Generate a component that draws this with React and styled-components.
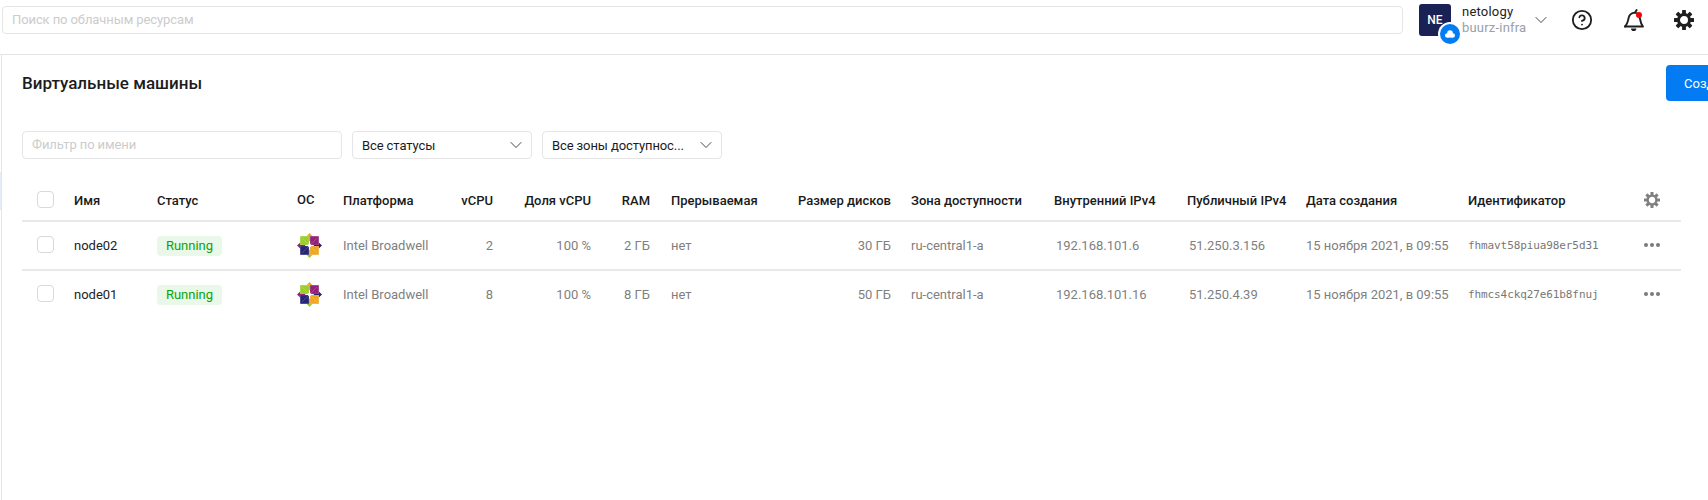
import React from 'react'
import styled, { createGlobalStyle } from 'styled-components'
import { ChevronDown, CircleHelp } from 'lucide-react'

const GlobalStyle = createGlobalStyle`
    html, body {
        margin: 0;
        height: 100%;
        background: #fff;
        overflow: hidden;
    }
    body {
        font-family: "Roboto", "Noto Sans", sans-serif;
        font-size: 13px;
        color: #000;
    }
    #root {
        height: 100%;
    }
`

const Page = styled.div`
    width: 1708px;
    height: 500px;
    overflow: hidden;
`

const Header = styled.header`
    display: flex;
    align-items: flex-start;
    height: 50px;
    padding: 4px 0 0 2px;
    border-bottom: 1px solid #e5e5e5;
`

const Search = styled.div`
    box-sizing: border-box;
    width: 1401px;
    height: 28px;
    margin-top: 2px;
    padding-left: 9px;
    line-height: 26px;
    border: 1px solid #e5e5e5;
    border-radius: 4px;
    color: #ccc;
    letter-spacing: -0.1px;
`

const Account = styled.div`
    display: flex;
    align-items: flex-start;
    margin-left: 16px;
`

const Avatar = styled.div`
    position: relative;
    width: 32px;
    height: 32px;
    border-radius: 3px;
    background: #1a2255;
    color: #fff;
    font-size: 12px;
    font-weight: 500;
    line-height: 33px;
    text-align: center;
`

const CloudBadge = styled.span`
    position: absolute;
    right: -9px;
    bottom: -8px;
    display: flex;
    align-items: center;
    justify-content: center;
    width: 20px;
    height: 20px;
    border-radius: 50%;
    background: #027bf3;
    box-shadow: 0 0 0 2px #fff;
`

const AccountText = styled.div`
    margin-left: 11px;
    line-height: 16px;
    letter-spacing: 0.2px;
`

const AccountName = styled.div`
    color: #222;
`

const FolderName = styled.div`
    color: #9aa0a8;
`

const AccountChevron = styled(ChevronDown)`
    margin: 6px 0 0 5px;
    color: #222;
`

const HeaderIcon = styled.span`
    position: relative;
    display: flex;
    align-items: center;
    justify-content: center;
    width: 24px;
    height: 24px;
    margin-top: 4px;
    margin-left: ${(props) => props.$gap}px;
    color: #1f1f1f;
`

const RedDot = styled.span`
    position: absolute;
    top: 4px;
    right: 3px;
    width: 6px;
    height: 6px;
    border-radius: 50%;
    background: #f00;
`

const Content = styled.main`
    position: relative;
    box-sizing: border-box;
    height: 445px;
    margin-left: 1px;
    padding-left: 20px;
    border-left: 1px solid #e5e5e5;
`

const SideHint = styled.span`
    position: absolute;
    left: -2px;
    top: 117px;
    width: 1px;
    height: 38px;
    background: #e3edf8;
`

const TitleRow = styled.div`
    display: flex;
    justify-content: space-between;
    width: 1744px;
    height: 46px;
    padding-top: 10px;
`

const Title = styled.h1`
    margin: 0;
    padding-top: 8px;
    font-size: 17px;
    line-height: 20px;
    font-weight: 500;
    color: #1c1c1c;
`

const CreateButton = styled.button`
    width: 100px;
    height: 36px;
    padding: 0 0 0 18px;
    border: 0;
    border-radius: 4px;
    background: #027bf3;
    color: #fff;
    font: inherit;
    text-align: left;
    white-space: nowrap;
`

const Filters = styled.div`
    display: flex;
    gap: 10px;
    margin-top: 20px;
`

const FilterInput = styled.div`
    box-sizing: border-box;
    width: 320px;
    height: 28px;
    padding-left: 9px;
    line-height: 26px;
    border: 1px solid #e5e5e5;
    border-radius: 4px;
    color: #ccc;
    letter-spacing: -0.1px;
`

const Select = styled.div`
    box-sizing: border-box;
    display: flex;
    align-items: center;
    justify-content: space-between;
    width: 180px;
    height: 28px;
    padding: 0 5px 0 9px;
    border: 1px solid #e5e5e5;
    border-radius: 4px;
    color: #1c1c1c;
    letter-spacing: -0.1px;

    svg {
        color: #222;
    }
`

const Table = styled.div`
    width: 1659px;
    margin-top: 21px;
`

const Row = styled.div`
    display: grid;
    grid-template-columns: 52px 83px 140px 46px 102px 48px 98px 59px 140px 101px 163px 133px 119px 162px 176px 37px;
    align-items: center;
    height: ${(props) => (props.$head ? '40px' : '47px')};
    border-bottom: 2px solid ${(props) => (props.$last ? 'transparent' : '#e9e9e9')};
`

const HeadCell = styled.div`
    font-weight: 500;
    color: #1a1a1a;
    white-space: nowrap;
    text-align: ${(props) => (props.$right ? 'right' : 'left')};
    padding-left: ${(props) => props.$pad || 0}px;
`

const OsHead = styled(HeadCell)`
    padding-bottom: 2px;
`

const Cell = styled.div`
    color: #7f7f7f;
    white-space: nowrap;
    text-align: ${(props) => (props.$right ? 'right' : 'left')};
    padding-left: ${(props) => props.$pad || 0}px;
`

const NameCell = styled(Cell)`
    color: #222;
`

const IdCell = styled(Cell)`
    font-family: "DejaVu Sans Mono", monospace;
    font-size: 11px;
    letter-spacing: -0.1px;
    color: #777;
`

const CheckCell = styled.div`
    display: flex;
    padding: 0 0 2px 15px;
`

const Checkbox = styled.span`
    box-sizing: border-box;
    display: block;
    width: 17px;
    height: 17px;
    border: 1px solid #d9d9d9;
    border-radius: 4px;
`

const StatusBadge = styled.span`
    display: inline-block;
    width: 65px;
    height: 20px;
    line-height: 20px;
    border-radius: 4px;
    background: #e9f8e9;
    color: #0aa50a;
    text-align: center;
`

const LogoCell = styled.div`
    display: flex;
`

const GearCell = styled.div`
    display: flex;
    color: #808080;
`

const Dots = styled.div`
    display: flex;
    gap: 2px;
    padding-bottom: 2px;
`

const Dot = styled.span`
    width: 4px;
    height: 4px;
    border-radius: 50%;
    background: #7a7a7a;
`

const GearIcon = ({ size }) => (
    <svg width={size} height={size} viewBox="0 0 24 24" fill="currentColor">
        <circle cx="12" cy="12" r="6.6" fill="none" stroke="currentColor" strokeWidth="3.6" />
        {[0, 45, 90, 135, 180, 225, 270, 315].map((deg) => (
            <rect key={deg} x="9.7" y="0" width="4.6" height="6" rx="0.6" transform={`rotate(${deg} 12 12)`} />
        ))}
    </svg>
)

const BellIcon = () => (
    <svg width="21" height="22" viewBox="0 0 21 22" fill="none" stroke="currentColor" strokeWidth="1.9" strokeLinecap="round" strokeLinejoin="round">
        <path d="M2 17.5C4.5 15 5 12 5.6 9C6.3 5.5 9 3.8 12 3.6L13.6 1" />
        <path d="M12 3.6C15 4 16.4 6.5 16.9 9.5C17.4 12.5 18 15.2 20 17.5H2" />
        <path d="M8 19.5a2.7 2.7 0 0 0 5.4 0z" fill="currentColor" stroke="none" />
    </svg>
)

const CloudIcon = () => (
    <svg width="10" height="8" viewBox="0 0 10 8" fill="#fff">
        <circle cx="5" cy="3" r="2.8" />
        <circle cx="2.2" cy="5.4" r="2.2" />
        <circle cx="7.8" cy="5.4" r="2.2" />
        <rect x="2" y="4" width="6" height="3.6" />
    </svg>
)

const CentOsLogo = () => (
    <svg width="25" height="25" viewBox="0 0 25 25">
        <path d="M12.5 0l3 3.2h-2.2v5h-1.6v-5H9.5z" fill="#efa724" />
        <path d="M12.5 25l-3-3.2h2.2v-5h1.6v5h2.2z" fill="#9ccd2a" />
        <path d="M0 12.5l3.2-3v2.2h5v1.6h-5v2.2z" fill="#932279" />
        <path d="M25 12.5l-3.2 3v-2.2h-5v-1.6h5V9.500z" fill="#262577" />
        <rect x="3.2" y="3.2" width="8.7" height="8.7" fill="#9ccd2a" />
        <rect x="13.1" y="3.2" width="8.7" height="8.7" fill="#932279" />
        <rect x="3.2" y="13.1" width="8.700" height="8.7" fill="#262577" />
        <rect x="13.1" y="13.1" width="8.7" height="8.7" fill="#efa724" />
        <path d="M5 5l6 6M20 5l-6 6M5 20l6-6M20 20l-6-6" stroke="#fff" strokeOpacity="0.25" strokeWidth="0.7" />
        <path d="M12.5 10.300l2.200 2.200-2.200 2.200-2.200-2.200z" fill="#fff" />
    </svg>
)

const vms = [
    { name: 'node02', cpu: 2, ram: '2 ГБ', disk: '30 ГБ', ip: '192.168.101.6', pub: '51.250.3.156', id: 'fhmavt58piua98er5d31' },
    { name: 'node01', cpu: 8, ram: '8 ГБ', disk: '50 ГБ', ip: '192.168.101.16', pub: '51.250.4.39', id: 'fhmcs4ckq27e61b8fnuj' },
]

const App = () => {
    return (
        <Page>
            <GlobalStyle />
            <Header>
                <Search>Поиск по облачным ресурсам</Search>
                <Account>
                    <Avatar>
                        NE
                        <CloudBadge><CloudIcon /></CloudBadge>
                    </Avatar>
                    <AccountText>
                        <AccountName>netology</AccountName>
                        <FolderName>buurz-infra</FolderName>
                    </AccountText>
                    <AccountChevron size={20} strokeWidth={1} />
                </Account>
                <HeaderIcon $gap={19}><CircleHelp size={22} strokeWidth={2} /></HeaderIcon>
                <HeaderIcon $gap={27}><BellIcon /><RedDot /></HeaderIcon>
                <HeaderIcon $gap={27}><GearIcon size={20} /></HeaderIcon>
            </Header>
            <Content>
                <SideHint />
                <TitleRow>
                    <Title>Виртуальные машины</Title>
                    <CreateButton>Создать ВМ</CreateButton>
                </TitleRow>
                <Filters>
                    <FilterInput>Фильтр по имени</FilterInput>
                    <Select>Все статусы<ChevronDown size={20} strokeWidth={1} /></Select>
                    <Select>Все зоны доступнос...<ChevronDown size={20} strokeWidth={1} /></Select>
                </Filters>
                <Table>
                    <Row $head>
                        <CheckCell><Checkbox /></CheckCell>
                        <HeadCell>Имя</HeadCell>
                        <HeadCell>Статус</HeadCell>
                        <OsHead>ОС</OsHead>
                        <HeadCell>Платформа</HeadCell>
                        <HeadCell $right>vCPU</HeadCell>
                        <HeadCell $right>Доля vCPU</HeadCell>
                        <HeadCell $right>RAM</HeadCell>
                        <HeadCell $pad={21}>Прерываемая</HeadCell>
                        <HeadCell $right>Размер дисков</HeadCell>
                        <HeadCell $pad={20}>Зона доступности</HeadCell>
                        <HeadCell>Внутренний IPv4</HeadCell>
                        <HeadCell>Публичный IPv4</HeadCell>
                        <HeadCell>Дата создания</HeadCell>
                        <HeadCell>Идентификатор</HeadCell>
                        <GearCell><GearIcon size={16} /></GearCell>
                    </Row>
                    {vms.map((vm, i) => (
                        <Row key={vm.id} $last={i === vms.length - 1}>
                            <CheckCell><Checkbox /></CheckCell>
                            <NameCell>{vm.name}</NameCell>
                            <div><StatusBadge>Running</StatusBadge></div>
                            <LogoCell><CentOsLogo /></LogoCell>
                            <Cell>Intel Broadwell</Cell>
                            <Cell $right>{vm.cpu}</Cell>
                            <Cell $right>100 %</Cell>
                            <Cell $right>{vm.ram}</Cell>
                            <Cell $pad={21}>нет</Cell>
                            <Cell $right>{vm.disk}</Cell>
                            <Cell $pad={20}>ru-central1-a</Cell>
                            <Cell $pad={2}>{vm.ip}</Cell>
                            <Cell $pad={2}>{vm.pub}</Cell>
                            <Cell>15 ноября 2021, в 09:55</Cell>
                            <IdCell>{vm.id}</IdCell>
                            <Dots><Dot /><Dot /><Dot /></Dots>
                        </Row>
                    ))}
                </Table>
            </Content>
        </Page>
    )
}

export default App
